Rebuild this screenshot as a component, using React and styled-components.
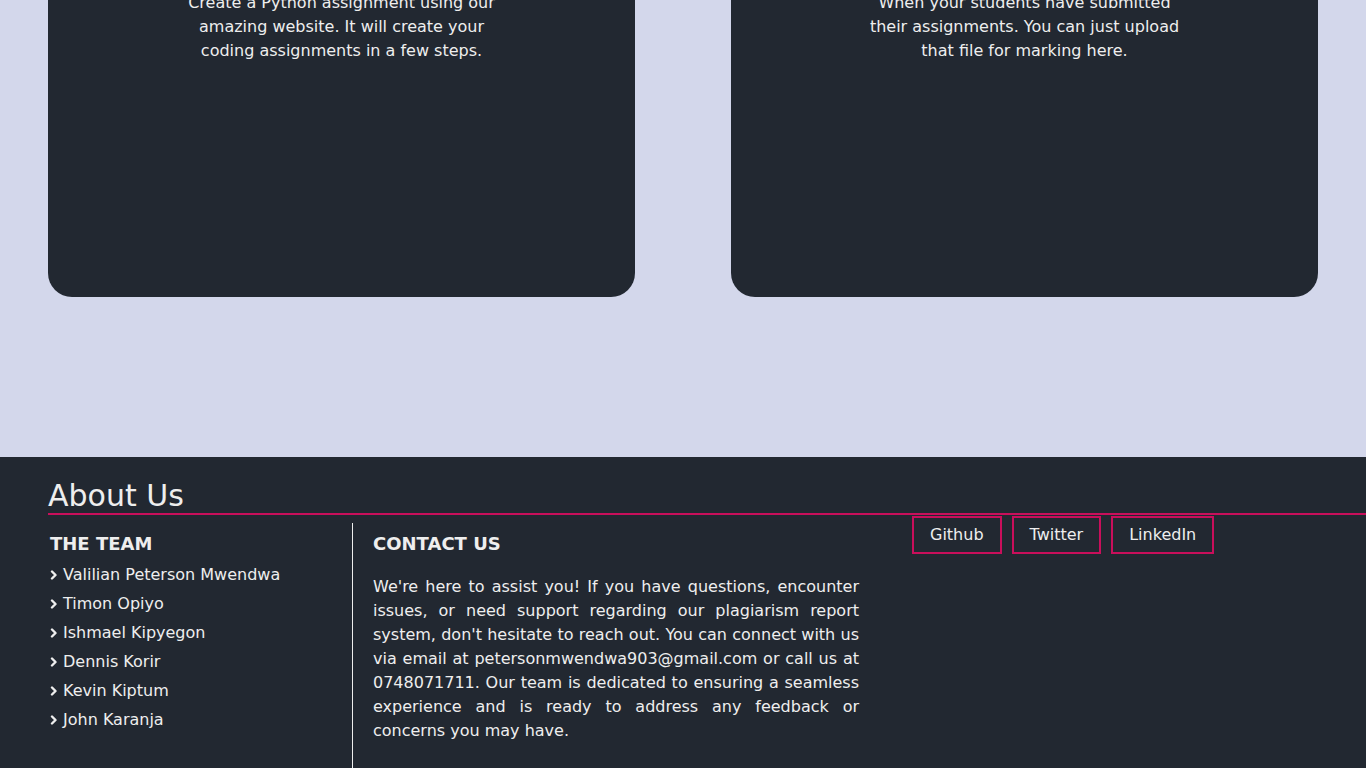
import React from "react";
import styled, { createGlobalStyle } from "styled-components";

const team = [
  "Valilian Peterson Mwendwa",
  "Timon Opiyo",
  "Ishmael Kipyegon",
  "Dennis Korir",
  "Kevin Kiptum",
  "John Karanja",
];

const cards = [
  "Create a Python assignment using our amazing website. It will create your coding assignments in a few steps.",
  "When your students have submitted their assignments. You can just upload that file for marking here.",
];

function Chevron() {
  return (
    <svg width="8" height="10" viewBox="0 0 8 10">
      <polyline
        points="2,1.5 5.5,5 2,8.5"
        fill="none"
        stroke="#eeeeee"
        strokeWidth="2.4"
        strokeLinecap="round"
        strokeLinejoin="round"
      />
    </svg>
  );
}

function App() {
  return (
    <>
      <GlobalStyle />
      <Features>
        <CardGrid>
          {cards.map((text) => (
            <Card key={text}>
              <CardText>{text}</CardText>
            </Card>
          ))}
        </CardGrid>
      </Features>
      <Footer>
        <FooterTitle>About Us</FooterTitle>
        <FooterRow>
          <TeamColumn>
            <ColumnTitle>THE TEAM</ColumnTitle>
            <TeamList>
              {team.map((name) => (
                <TeamItem key={name}>
                  <Chevron />
                  {name}
                </TeamItem>
              ))}
            </TeamList>
          </TeamColumn>
          <ContactColumn>
            <ColumnTitle>CONTACT US</ColumnTitle>
            <ContactText>
              We're here to assist you! If you have questions, encounter issues,
              or need support regarding our plagiarism report system, don't
              hesitate to reach out. You can connect with us via email at
              petersonmwendwa903@gmail.com or call us at 0748071711. Our team is
              dedicated to ensuring a seamless experience and is ready to
              address any feedback or concerns you may have.
            </ContactText>
          </ContactColumn>
          <Links>
            <SocialLink href="#">Github</SocialLink>
            <SocialLink href="#">Twitter</SocialLink>
            <SocialLink href="#">LinkedIn</SocialLink>
          </Links>
        </FooterRow>
      </Footer>
    </>
  );
}

const GlobalStyle = createGlobalStyle`
  body {
    margin: 0;
    background: #d3d7eb;
    font-family: "DejaVu Sans", "Noto Sans", sans-serif;
    color: #eeeeee;
    overflow: hidden;
  }
  * {
    box-sizing: border-box;
  }
`;

const Features = styled.section`
  margin-top: -9px;
  padding: 0 48px 160px;
`;

const CardGrid = styled.div`
  display: grid;
  grid-template-columns: 587px 587px;
  gap: 96px;
`;

const Card = styled.div`
  background: #222831;
  border-radius: 0 0 24px 24px;
  padding: 0 0 234px;
`;

const CardText = styled.p`
  max-width: 320px;
  margin: 0 auto;
  font-size: 16px;
  line-height: 24px;
  text-align: center;
  color: #eeeeee;
`;

const Footer = styled.footer`
  background: #222831;
  padding: 21px 0 0 48px;
  min-height: 340px;
`;

const FooterTitle = styled.h2`
  margin: 0;
  font-size: 30px;
  font-weight: normal;
  line-height: 35px;
  border-bottom: 2px solid #c90f5b;
`;

const FooterRow = styled.div`
  display: flex;
  align-items: flex-start;
`;

const TeamColumn = styled.div`
  width: 304px;
  margin-top: 8px;
  padding-left: 2px;
`;

const ColumnTitle = styled.h3`
  margin: 10px 0 0;
  font-size: 18px;
  font-weight: bold;
  line-height: 21px;
`;

const TeamList = styled.ul`
  list-style: none;
  margin: 6px 0 0;
  padding: 0;
`;

const TeamItem = styled.li`
  display: flex;
  align-items: center;
  gap: 5px;
  font-size: 16px;
  line-height: 29px;
`;

const ContactColumn = styled.div`
  width: 527px;
  margin-top: 8px;
  padding: 0 20px 40px;
  border-left: 1px solid #eeeeee;
`;

const ContactText = styled.p`
  margin: 21px 0 0;
  font-size: 16px;
  line-height: 24px;
  text-align: justify;
`;

const Links = styled.div`
  display: flex;
  gap: 10px;
  margin-left: 33px;
  padding-top: 1px;
`;

const SocialLink = styled.a`
  display: block;
  padding: 8px 16px;
  border: 2px solid #c90f5b;
  color: #eeeeee;
  font-size: 16px;
  line-height: 18px;
  text-decoration: none;
`;

export default App;
